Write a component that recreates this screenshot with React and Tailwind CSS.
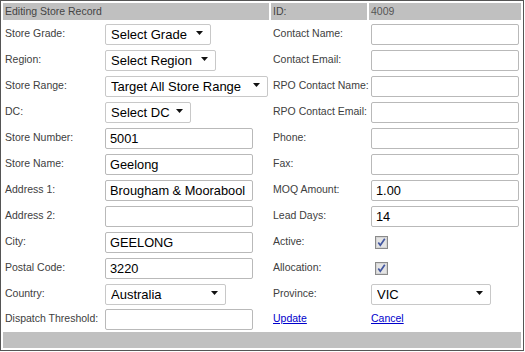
import React from 'react';

const Label = ({ children }) => (
  <div className="flex items-center pl-[2px] text-[10.5px] text-[#404040] whitespace-nowrap">{children}</div>
);

const TextBox = ({ value = '' }) => (
  <div className="flex items-center pl-[2px]">
    <input
      type="text"
      defaultValue={value}
      className="w-[148px] h-[21px] border border-[#b9b9b9] rounded-[2px] bg-white pl-[4px] pr-[1px] text-[12.8px] text-black outline-none font-['Liberation_Sans',Arial,sans-serif]"
    />
  </div>
);

const Dropdown = ({ value, width }) => (
  <div className="flex items-center pl-[2px]">
    <div className="relative" style={{ width }}>
      <select
        defaultValue={value}
        className="w-full h-[21px] appearance-none border border-[#c8c8c8] rounded-[2px] bg-white pl-[5px] text-[13px] text-black outline-none font-['Liberation_Sans',Arial,sans-serif]"
      >
        <option>{value}</option>
      </select>
      <svg className="absolute right-[8px] top-[9px] pointer-events-none" width="7" height="4" viewBox="0 0 7 4">
        <path d="M0 0 H7 L3.5 4 Z" fill="#111" />
      </svg>
    </div>
  </div>
);

const Check = () => (
  <div className="flex items-center pl-[6px]">
    <svg width="13" height="13" viewBox="0 0 13 13">
      <rect x="0.5" y="0.5" width="12" height="12" fill="#d4d4d4" stroke="#8a8a8a" />
      <rect x="2" y="2" width="9" height="9" fill="#e4e4e4" />
      <path d="M3.3 6.6 L5.3 9.3 L9.8 2.8" fill="none" stroke="#4357a0" strokeWidth="1.7" />
    </svg>
  </div>
);

const Link = ({ children }) => (
  <div className="flex items-center pl-[2px]">
    <a href="#" className="text-[10.5px] text-[#0000cc] underline">{children}</a>
  </div>
);

export default function App() {
  return (
    <div className="w-[524px] h-[351px] border border-[#555555] bg-white p-[2px] font-['Liberation_Sans',Arial,sans-serif]">
      <div className="grid grid-cols-[98px_166px_96px_152px] grid-rows-[17px_repeat(11,24px)_22px_16px] gap-[2px]">
        <div className="col-span-2 bg-[#c0c0c0] flex items-center pl-[2px] text-[10.5px] text-[#444]">Editing Store Record</div>
        <div className="bg-[#c0c0c0] flex items-center pl-[2px] text-[10.5px] text-[#444]">ID:</div>
        <div className="bg-[#c0c0c0] flex items-center pl-[2px] text-[10.5px] text-[#555]">4009</div>

        <Label>Store Grade:</Label>
        <Dropdown value="Select Grade" width={106} />
        <Label>Contact Name:</Label>
        <TextBox />

        <Label>Region:</Label>
        <Dropdown value="Select Region" width={111} />
        <Label>Contact Email:</Label>
        <TextBox />

        <Label>Store Range:</Label>
        <Dropdown value="Target All Store Range" width={163} />
        <Label>RPO Contact Name:</Label>
        <TextBox />

        <Label>DC:</Label>
        <Dropdown value="Select DC" width={86} />
        <Label>RPO Contact Email:</Label>
        <TextBox />

        <Label>Store Number:</Label>
        <TextBox value="5001" />
        <Label>Phone:</Label>
        <TextBox />

        <Label>Store Name:</Label>
        <TextBox value="Geelong" />
        <Label>Fax:</Label>
        <TextBox />

        <Label>Address 1:</Label>
        <TextBox value="Brougham & Moorabool" />
        <Label>MOQ Amount:</Label>
        <TextBox value="1.00" />

        <Label>Address 2:</Label>
        <TextBox />
        <Label>Lead Days:</Label>
        <TextBox value="14" />

        <Label>City:</Label>
        <TextBox value="GEELONG" />
        <Label>Active:</Label>
        <Check />

        <Label>Postal Code:</Label>
        <TextBox value="3220" />
        <Label>Allocation:</Label>
        <Check />

        <Label>Country:</Label>
        <Dropdown value="Australia" width={121} />
        <Label>Province:</Label>
        <Dropdown value="VIC" width={120} />

        <Label>Dispatch Threshold:</Label>
        <TextBox />
        <Link>Update</Link>
        <Link>Cancel</Link>

        <div className="col-span-4 bg-[#c0c0c0]" />
      </div>
    </div>
  );
}
